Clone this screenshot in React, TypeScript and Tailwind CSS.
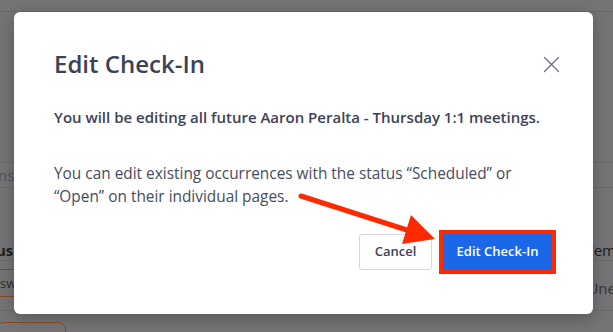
import React from "react"

const font = { fontFamily: '"Open Sans", "Liberation Sans", sans-serif' }

function CloseIcon() {
  return (
    <svg width="17" height="17" viewBox="0 0 17 17" fill="none" stroke="#6f7487" strokeWidth="1.4" strokeLinecap="round">
      <path d="M1.5 1.5 L15.5 15.5 M15.5 1.5 L1.5 15.5" />
    </svg>
  )
}

// blurred page behind the overlay, only edges peek out
function Backdrop() {
  return (
    <div className="absolute inset-0 text-[15px] leading-[24px]">
      <div className="h-[12px] border-b border-[#6a6a6c]" />
      <div className="h-[150px]" />
      <div className="h-[26px] border-y border-[#68686a] text-[#505052] -ml-[2px]">ns</div>
      <div className="h-[50px]" />
      <div className="h-[23px] flex justify-between border-b border-[#6a6a6c]">
        <span className="font-bold text-[#1e1e20] -ml-[4px]">us</span>
        <span className="text-[#1e1e20] -mr-[3px]">Tem</span>
      </div>
      <div className="h-[8px]" />
      <div className="h-[28px] flex justify-between items-start">
        <span className="w-[14px] h-[28px] border-y border-[#8a4a1e] text-[13px] text-[#2a2a2a] leading-[26px]">sw</span>
        <span className="text-[#333335] -mr-[3px] mt-[7px]">Une</span>
      </div>
      <div className="h-[14px] border-b border-[#6a6a6c]" />
      <div className="mt-[11px] -ml-[4px] w-[70px] h-[20px] rounded-[8px] border border-[#8a4a1e]" />
    </div>
  )
}

export default function App() {
  return (
    <div className="relative w-[613px] h-[332px] overflow-hidden bg-[#747476]" style={font}>
      <Backdrop />

      <div className="relative pt-[12px] pl-[14px]">
        <div className="w-[579px] h-[302px] bg-white rounded-[6px] shadow-[0_4px_16px_rgba(0,0,0,0.25)] px-[40px] pt-[35px]">
          <div className="flex items-center justify-between">
            <h2 className="text-[24px] leading-[34px] font-semibold text-[#3b4257]">Edit Check-In</h2>
            <button className="-mr-[7px] mt-[1px]"><CloseIcon /></button>
          </div>
          <p className="mt-[24px] text-[15px] leading-[24px] font-semibold text-[#3b4257]">
            You will be editing all future Aaron Peralta - Thursday 1:1 meetings.
          </p>
          <p className="mt-[33px] text-[15.4px] leading-[23px] text-[#454c60]">
            You can edit existing occurrences with the status “Scheduled” or
            <br />
            “Open” on their individual pages.
          </p>
          <div className="mt-[26px] flex justify-end gap-[11px] pr-[1px]">
            <button className="w-[73px] h-[36px] rounded-[3px] border border-[#d6d7df] bg-white text-[13px] font-semibold text-[#3b4257]">
              Cancel
            </button>
            <button className="w-[109px] h-[36px] rounded-none bg-[#1a67e8] text-[13px] font-semibold text-white outline-4 outline-[#ff2a00]">
              Edit Check-In
            </button>
          </div>
        </div>
      </div>

      {/* annotation arrow */}
      <svg className="absolute left-0 top-0 pointer-events-none" width="613" height="332">
        <line x1="301" y1="196" x2="410" y2="231" stroke="#ff2a00" strokeWidth="5" strokeLinecap="round" />
        <polygon points="435,239 411,215 402,244" fill="#ff2a00" />
      </svg>
    </div>
  )
}
